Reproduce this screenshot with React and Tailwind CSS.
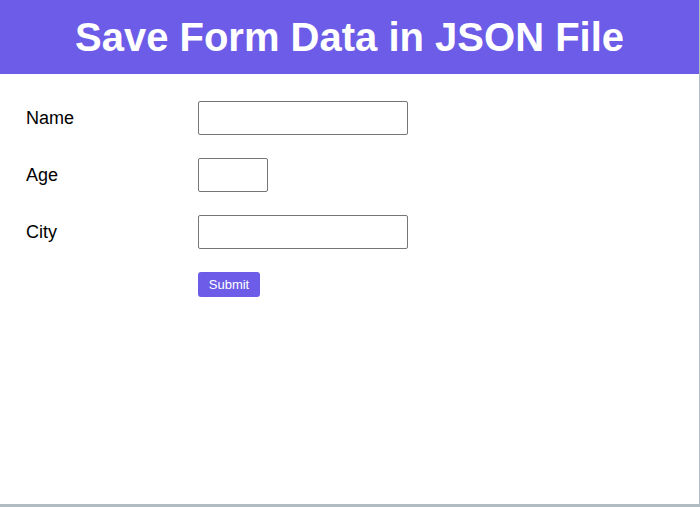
import React, { useState } from 'react';

const fields = [
  { id: 'name', label: 'Name', width: 'w-[210px]' },
  { id: 'age', label: 'Age', width: 'w-[70px]' },
  { id: 'city', label: 'City', width: 'w-[210px]' },
];

const App = () => {
  const [form, setForm] = useState({ name: '', age: '', city: '' });

  const handleChange = (e) => {
    setForm({ ...form, [e.target.name]: e.target.value });
  };

  return (
    <div className="h-[507px] bg-white border-r border-b-[3px] border-[#b0bcc2] font-['Liberation_Sans',Arial,sans-serif]">
      {/* Header */}
      <header className="h-[74px] bg-[#6c5ce7] flex items-center justify-center">
        <h1 className="text-white text-[40px] font-bold leading-none">Save Form Data in JSON File</h1>
      </header>

      {/* Form */}
      <form className="px-[26px] pt-[27px] flex flex-col gap-[23px]" onSubmit={(e) => e.preventDefault()}>
        {fields.map((f) => (
          <div key={f.id} className="flex items-center">
            <label htmlFor={f.id} className="w-[172px] text-[18px] text-black">
              {f.label}
            </label>
            <input
              id={f.id}
              name={f.id}
              type="text"
              value={form[f.id]}
              onChange={handleChange}
              className={`${f.width} h-[34px] border border-[#767676] rounded-[2px] px-2 text-[16px] outline-none`}
            />
          </div>
        ))}
        <div className="flex">
          <div className="w-[172px]" />
          <button
            type="submit"
            className="w-[62px] h-[25px] bg-[#6c5ce7] text-white text-[13px] rounded-[3px] flex items-center justify-center"
          >
            Submit
          </button>
        </div>
      </form>
    </div>
  );
};

export default App;
